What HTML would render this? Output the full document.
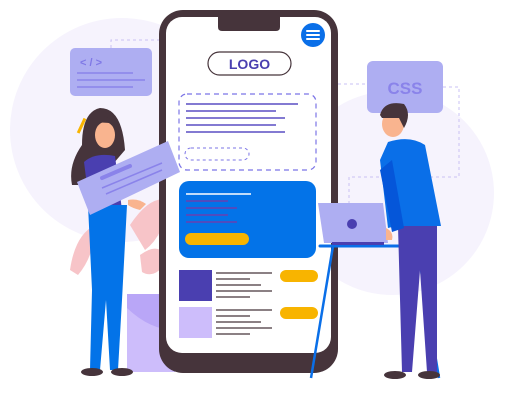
<!DOCTYPE html>
<html><head><style>html,body{margin:0;padding:0;background:#fff;width:510px;height:401px;overflow:hidden}</style></head>
<body>
<svg width="510" height="401" viewBox="0 0 510 401" xmlns="http://www.w3.org/2000/svg" font-family="Liberation Sans, sans-serif">
<circle cx="122" cy="130" r="112" fill="#f6f3fd"/>
<circle cx="392" cy="193" r="102" fill="#f6f3fd"/>
<path d="M111 60 V40 H160" stroke="#c9c2f4" stroke-width="1" stroke-dasharray="3 3" fill="none"/>
<path d="M338 84 H367 M443 87 H459 V177 H349 V205" stroke="#c9c2f4" stroke-width="1" stroke-dasharray="3 3" fill="none"/>
<rect x="70" y="48" width="82" height="48" rx="5" fill="#aeaef2"/>
<text x="80" y="66" font-size="11" fill="#7f78e6" font-weight="bold">&lt; / &gt;</text>
<path d="M77 73H133M77 80H145M77 87H133" stroke="#8a83ea" stroke-width="1.5"/>
<rect x="367" y="61" width="76" height="52" rx="6" fill="#aeaef2"/>
<text x="405" y="94" font-size="17" font-weight="bold" fill="#8a83ea" text-anchor="middle">CSS</text>
<g fill="#f7c4c8">
<path d="M70 270 Q75 235 95 225 Q95 255 78 275Z"/>
<path d="M130 225 Q150 195 168 200 Q165 235 145 250Z"/>
<path d="M140 255 Q160 240 168 260 Q155 280 142 272Z"/>
</g>
<rect x="127" y="294" width="48" height="78" fill="#cdbdfb"/>
<path d="M127 308 Q150 330 175 330 V294 H127Z" fill="#b9a6f7"/>
<rect x="159" y="10" width="179" height="363" rx="24" fill="#46343b"/>
<rect x="166" y="17" width="165" height="336" rx="16" fill="#fff"/>
<path d="M218 10 H280 V27 Q280 31 276 31 H222 Q218 31 218 27Z" fill="#46343b"/>
<circle cx="313" cy="35" r="12" fill="#0a6fe8"/>
<path d="M307 31H319M307 35H319M307 39H319" stroke="#fff" stroke-width="2" stroke-linecap="round"/>
<rect x="208" y="52" width="83" height="23" rx="11.5" fill="#fff" stroke="#46343b" stroke-width="1.2"/>
<text x="249.5" y="69" font-size="14" font-weight="bold" fill="#4a3fb0" text-anchor="middle">LOGO</text>
<rect x="179" y="94" width="137" height="76" rx="8" fill="none" stroke="#7b74e6" stroke-width="1.2" stroke-dasharray="5 4"/>
<path d="M186 104H298M186 111H276M186 118H285M186 125H276M186 132H285" stroke="#5a4fc4" stroke-width="1.5"/>
<rect x="185" y="148" width="64" height="12" rx="6" fill="none" stroke="#7b74e6" stroke-width="1" stroke-dasharray="3 3"/>
<rect x="179" y="181" width="137" height="77" rx="10" fill="#0373e8"/>
<path d="M186 194H251" stroke="#fff" stroke-width="1.5"/>
<path d="M186 201H228M186 208H237M186 215H228M186 222H237" stroke="#6a3fb0" stroke-width="1.5"/>
<rect x="185" y="233" width="64" height="12" rx="6" fill="#f8b400"/>
<rect x="179" y="270" width="33" height="31" fill="#4a3fb0"/>
<rect x="179" y="307" width="33" height="31" fill="#cdbdfb"/>
<path d="M216 273H272M216 279H250M216 285H261M216 291H272M216 297H250M216 310H272M216 316H250M216 322H261M216 328H272M216 334H250" stroke="#46343b" stroke-width="1.3"/>
<rect x="280" y="270" width="38" height="12" rx="6" fill="#f8b400"/>
<rect x="280" y="307" width="38" height="12" rx="6" fill="#f8b400"/>
<!-- woman -->
<path d="M100 108 Q82 112 82 145 Q68 165 72 185 L95 185 L125 150 Q122 108 100 108Z" fill="#46343b"/>
<ellipse cx="105" cy="135" rx="10" ry="13" fill="#f9b48f"/>
<path d="M92 122 Q105 108 117 128 L110 123 Z" fill="#46343b"/>
<path d="M84 162 Q95 152 115 156 L122 210 H90Z" fill="#4a3fb0"/>
<path d="M88 205 H127 L122 300 L118 370 H110 L106 300 L100 370 H90 L92 290Z" fill="#0373e8"/>
<ellipse cx="92" cy="372" rx="11" ry="4" fill="#46343b"/>
<ellipse cx="122" cy="372" rx="11" ry="4" fill="#46343b"/>
<path d="M90 215 L77 182 L168 141 L180 172Z" fill="#aeaef2"/>
<path d="M102 178 L130 166" stroke="#8a83ea" stroke-width="4" stroke-linecap="round"/>
<path d="M102 188 L162 163 M106 194 L162 170" stroke="#8a83ea" stroke-width="1.5"/>
<path d="M128 200 Q138 198 146 204 L140 210 Q132 208 128 205Z" fill="#f9b48f"/>
<rect x="80" y="118" width="3" height="16" fill="#f8b400" transform="rotate(25 82 126)"/>
<!-- table -->
<path d="M320 246H425" stroke="#0a6fe8" stroke-width="3" stroke-linecap="round"/>
<path d="M333 246 L311 378 M417 246 L439 378" stroke="#0a6fe8" stroke-width="2.5"/>
<!-- man -->
<path d="M398 226 H437 L437 372 H427 L420 270 L412 372 H402Z" fill="#4a3fb0"/>
<ellipse cx="395" cy="375" rx="11" ry="4" fill="#46343b"/>
<ellipse cx="429" cy="375" rx="11" ry="4" fill="#46343b"/>
<path d="M388 142 Q410 135 425 145 L441 226 H396 L388 228 L380 160Z" fill="#0a6fe8"/>
<path d="M392 160 L404 228 L392 232 L380 170Z" fill="#0556d9"/>
<ellipse cx="393" cy="124" rx="11" ry="13" fill="#f9b48f"/>
<path d="M380 115 Q384 100 404 104 Q412 114 404 128 L399 118 L382 118Z" fill="#46343b"/>
<path d="M318 203 H383 L388 243 H324Z" fill="#aeaef2"/>
<circle cx="352" cy="224" r="5" fill="#4a3fb0"/>
<rect x="332" y="242" width="52" height="3" fill="#4a3fb0"/>
<path d="M386 228 Q394 232 392 240 L386 240Z" fill="#f9b48f"/>
</svg>
</body></html>
